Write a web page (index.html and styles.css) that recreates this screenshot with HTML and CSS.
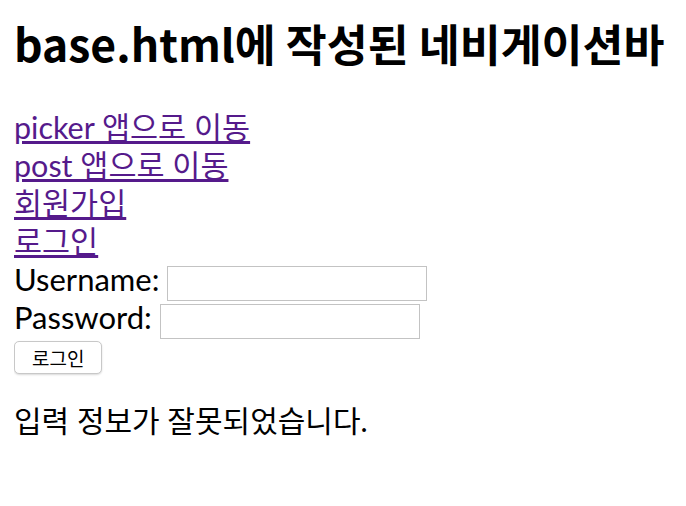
FILE: index.html
```html
<!DOCTYPE html>
<html>
<head>
    <title>로그인</title>
    <link rel="stylesheet" href="styles.css">
</head>
<body>
    <h1>base.html에 작성된 네비게이션바</h1>
    <nav class="nav">
        <a href="#">picker 앱으로 이동</a>
        <a href="#">post 앱으로 이동</a>
        <a href="#">회원가입</a>
        <a href="#">로그인</a>
    </nav>
    <form class="login-form">
        <label class="row">Username: <input type="text" class="field"></label>
        <label class="row">Password: <input type="password" class="field"></label>
        <button type="submit" class="login-btn">로그인</button>
    </form>
    <p class="error-msg">입력 정보가 잘못되었습니다.</p>
</body>
</html>
```

FILE: styles.css
```css
body {
    margin: 0 14px;
    font-family: Lato, "Noto Sans CJK KR", sans-serif;
    font-size: 31px;
    color: #000;
    background: #fff;
}
h1 {
    font-family: "Noto Sans CJK KR", "Noto Sans", sans-serif;
    font-size: 44.5px;
    font-weight: bold;
    line-height: 58px;
    margin: 14px 0 36px;
}
.nav {
    display: flex;
    flex-direction: column;
    align-items: flex-start;
    font-size: 30.5px;
}
.nav a {
    display: inline-block;
    height: 38px;
    line-height: 38px;
    color: #551a8b;
}
.login-form {
    margin: 0;
}
.row {
    display: block;
    height: 38px;
    line-height: 38px;
}
.field {
    width: 260px;
    height: 35px;
    box-sizing: border-box;
    border: 1px solid #c3c3c3;
    margin: 0;
    vertical-align: middle;
}
.login-btn {
    display: block;
    margin-top: 5px;
    padding: 0 17px;
    height: 33px;
    font-family: "Noto Sans CJK KR", sans-serif;
    font-size: 19px;
    background: #fff;
    border: 1px solid #c8c8c8;
    border-radius: 5px;
    box-shadow: 0 1px 2px rgba(0,0,0,0.15);
}
.error-msg {
    font-size: 30px;
    line-height: 38px;
    margin: 27px 0;
}
```
